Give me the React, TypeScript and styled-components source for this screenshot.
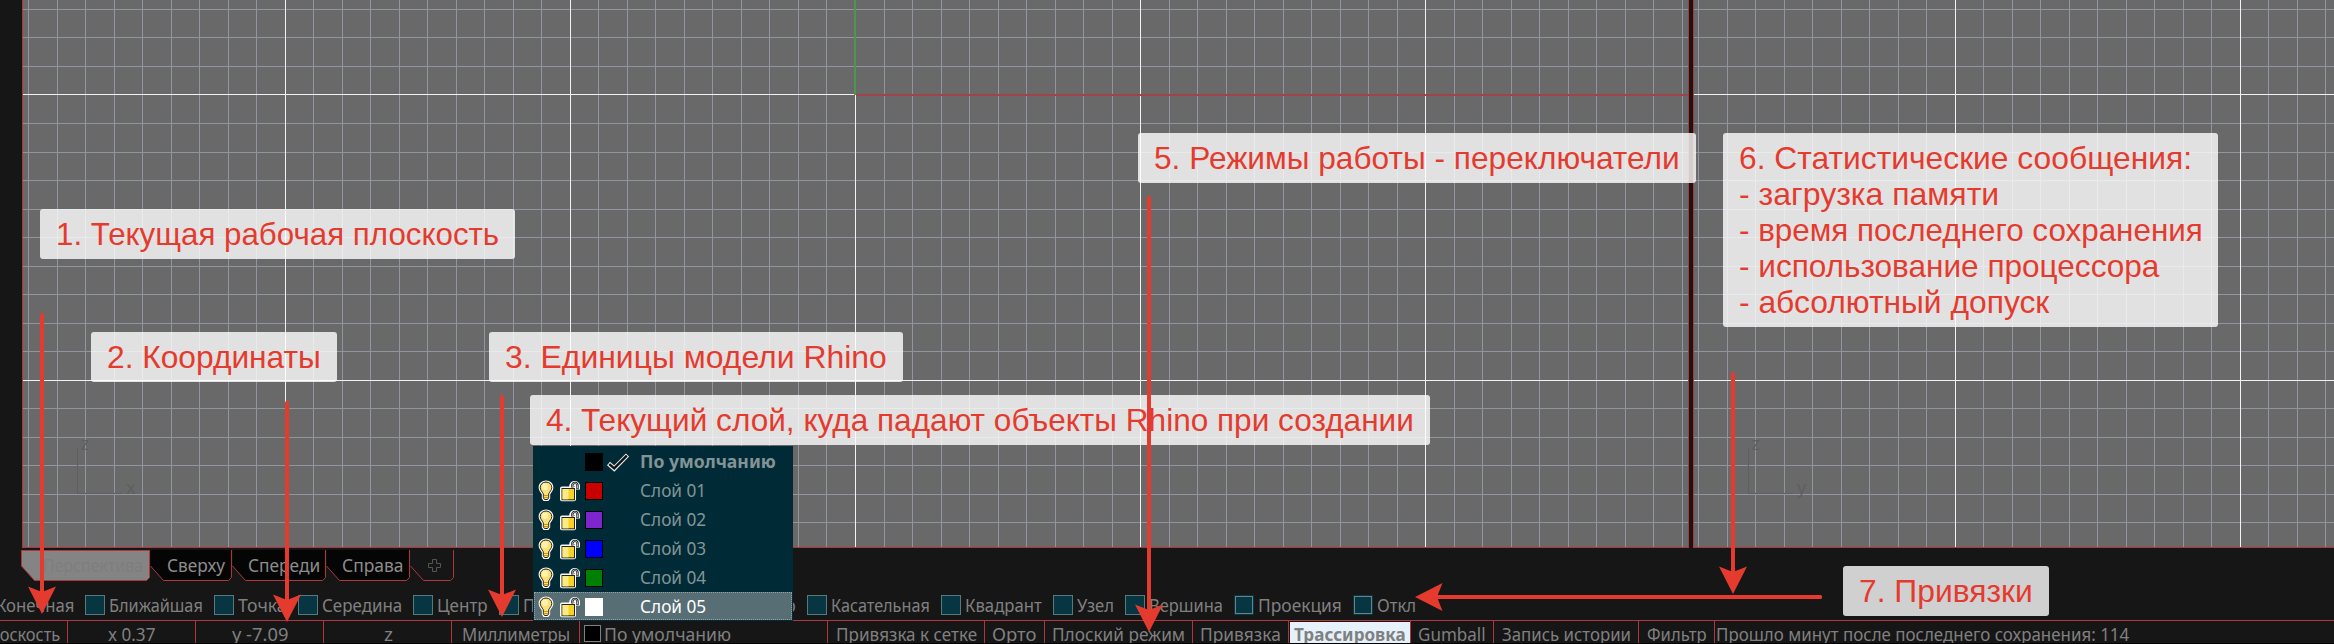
import React, { useLayoutEffect, useRef } from 'react';
import styled, { createGlobalStyle, css } from 'styled-components';

const RED = '#b0363b';
const ACCENT = '#e53b2e';
const DARK = '#161616';

const GlobalStyle = createGlobalStyle`
  *, *::before, *::after { box-sizing: border-box; }
  body { margin: 0; background: ${DARK}; overflow: hidden; }
`;

const Screen = styled.main`
  position: relative;
  display: flex;
  flex-direction: column;
  width: 2334px;
  height: 644px;
  overflow: hidden;
  background: ${DARK};
  color: #808080;
  font: 18px 'Noto Sans', 'Open Sans', sans-serif;
`;

/* ---------- text condensed or widened to a known width ---------- */

const FitBox = styled.span<{ $width: number }>`
  display: block;
  flex: none;
  width: ${(p) => p.$width}px;
  white-space: pre;
`;

const FitInner = styled.span`
  display: inline-block;
  transform-origin: 0 50%;
`;

function Fit({ width, children }: { width: number; children: string }) {
  const ref = useRef<HTMLSpanElement>(null);
  useLayoutEffect(() => {
    const el = ref.current;
    if (el) el.style.transform = `scaleX(${width / el.offsetWidth})`;
  }, [width, children]);
  return (
    <FitBox $width={width}>
      <FitInner ref={ref}>{children}</FitInner>
    </FitBox>
  );
}

/* ---------- viewports ---------- */

const Viewports = styled.section`
  display: flex;
  flex: none;
  gap: 4px;
  height: 548px;
  padding-left: 22px;
`;

const Viewport = styled.div<{ $width?: number }>`
  ${(p) => (p.$width ? css`flex: none; width: ${p.$width}px; border-right: 1px solid ${RED};` : css`flex: 1;`)}
  border-left: 1px solid ${RED};
  border-bottom: 1px solid ${RED};
  background: #696969;
  overflow: hidden;
`;

const Canvas = styled.svg`
  display: block;
  font: 18px 'Noto Sans', sans-serif;
`;

const STEP = 28.505;

function lines(origin: number, from: number, to: number, snap: (v: number) => number) {
  const out: { pos: number; major: boolean }[] = [];
  for (let n = -40; n <= 60; n++) {
    const pos = snap(origin + n * STEP);
    if (pos >= from && pos < to) out.push({ pos, major: n % 10 === 0 });
  }
  return out;
}

interface GridProps {
  left: number;
  right: number;
  origin: number;
  snap: (v: number) => number;
  children?: React.ReactNode;
}

function Grid({ left, right, origin, snap, children }: GridProps) {
  const w = right - left;
  const cols = lines(origin, left, right, snap);
  const rows = lines(94.49, 0, 547, Math.round);
  const order = [false, true];
  return (
    <Canvas width={w} height={547} viewBox={`${left} 0 ${w} 547`}>
      {order.map((major) => (
        <g key={String(major)} fill={major ? '#f2f2f2' : '#8f969f'} shapeRendering="crispEdges">
          {cols.filter((l) => l.major === major).map((l) => (
            <rect key={`c${l.pos}`} x={l.pos} y={0} width={1} height={547} />
          ))}
          {rows.filter((l) => l.major === major).map((l) => (
            <rect key={`r${l.pos}`} x={left} y={l.pos} width={w} height={1} />
          ))}
        </g>
      ))}
      {children}
    </Canvas>
  );
}

function AxisMark({ x, up, side }: { x: number; up: string; side: string }) {
  return (
    <g fill="#5f5f5f">
      <rect x={x} y={448} width={1} height={46} />
      <rect x={x} y={493} width={45} height={1} />
      <text x={x + 3.5} y={449.5}>{up}</text>
      <text x={x + 49} y={494}>{side}</text>
    </g>
  );
}

/* ---------- viewport tabs ---------- */

const Tabs = styled.nav`
  display: flex;
  flex: none;
  height: 42px;
  padding: 2px 0 0 21px;
`;

const Tab = styled.div<{ $width: number; $pad: number; $faint?: boolean }>`
  position: relative;
  flex: none;
  width: ${(p) => p.$width}px;
  height: 31px;
  padding-left: ${(p) => p.$pad}px;
  line-height: 30px;
  color: ${(p) => (p.$faint ? '#7e7e7e' : '#8c8c8c')};
`;

const TabShape = styled.svg`
  position: absolute;
  left: 0;
  top: 0;
  overflow: visible;
`;

const TabLabel = styled.div`
  position: relative;
`;

const PlusIcon = styled.svg`
  position: relative;
  display: block;
  margin-top: 9px;
`;

function ViewTab({ width, fill, pad, fit, label, faint }: {
  width: number; fill: string; pad: number; fit?: number; label?: string; faint?: boolean;
}) {
  return (
    <Tab $width={width} $pad={pad} $faint={faint}>
      <TabShape width={width} height={31}>
        <path d={`M0 0H${width - 0.5}V27.5L${width - 3.5} 30.5H13.5L0.5 16V0Z`} fill={fill} />
        <path
          d={`M${width - 0.5} 0V27.5L${width - 3.5} 30.5H13.5L0.5 16${faint ? 'V0.5H' + (width - 1) : ''}`}
          fill="none"
          stroke={RED}
        />
      </TabShape>
      {label ? (
        <TabLabel><Fit width={fit ?? 0}>{label}</Fit></TabLabel>
      ) : (
        <PlusIcon width="14" height="14" viewBox="0 0 14 14">
          <path d="M4.5 .5h4v4h4v4h-4v4h-4v-4h-4v-4h4z" fill="none" stroke="#555" />
        </PlusIcon>
      )}
    </Tab>
  );
}

/* ---------- object snaps ---------- */

const SnapBar = styled.div`
  display: flex;
  flex: none;
  align-items: center;
  height: 30px;
  margin-left: -28px;
`;

const Snap = styled.label<{ $width: number }>`
  display: flex;
  align-items: center;
  gap: 4px;
  flex: none;
  width: ${(p) => p.$width}px;
  line-height: 30px;
`;

const Check = styled.i<{ $inner?: boolean }>`
  flex: none;
  width: 20px;
  height: 20px;
  border: 1px solid ${(p) => (p.$inner ? '#073642' : '#58797c')};
  background: #073642;
  ${(p) => p.$inner && css`box-shadow: inset 0 0 0 1px #66838a;`}
`;

const SNAPS: [string, number][] = [
  ['Конечная', 113], ['Ближайшая', 129], ['Точка', 84], ['Середина', 115], ['Центр', 86],
  ['Пересечение', 141], ['Перпендикуляр', 167], ['Касательная', 134], ['Квадрант', 112],
  ['Узел', 72], ['Вершина', 109], ['Проекция', 119], ['Откл', 76],
];

/* ---------- status bar ---------- */

const StatusBar = styled.footer`
  display: flex;
  flex: none;
  height: 24px;
  border-top: 1px solid ${RED};
  border-bottom: 1px solid #000;
  overflow: hidden;
`;

const Cell = styled.div<{ $width: number; $pad: number; $first?: boolean; $active?: boolean }>`
  display: flex;
  flex: none;
  width: ${(p) => p.$width}px;
  height: 23px;
  padding-left: ${(p) => p.$pad}px;
  border-left: ${(p) => (p.$first ? 0 : 1)}px solid ${RED};
  line-height: 26px;
  ${(p) => p.$active && css`
    font-weight: 700;
    color: #808080;
    background: #e5f2fc;
    background-clip: padding-box;
    box-shadow: inset 0 1px 0 ${DARK}, inset 1px 0 0 ${DARK};
  `}
`;

const CellLabel = styled.div<{ $shift: number }>`
  flex: none;
  margin-left: ${(p) => p.$shift}px;
`;

const LayerSwatch = styled.i`
  flex: none;
  width: 17px;
  height: 17px;
  margin: 4px 3px 0 0;
  border: 1px solid #808080;
  background: #000;
`;

interface CellData { label: string; width: number; pad: number; fit: number; active?: boolean; swatch?: boolean }

const CELLS: CellData[] = [
  { label: 'Плоскость', width: 67, pad: 0, fit: 82 },
  { label: 'x 0.37', width: 128, pad: 40, fit: 47.5 },
  { label: 'y -7.09', width: 128, pad: 36, fit: 56 },
  { label: 'z', width: 128, pad: 60, fit: 8.5 },
  { label: 'Миллиметры', width: 128, pad: 10, fit: 108 },
  { label: 'По умолчанию', width: 248, pad: 4, fit: 127, swatch: true },
  { label: 'Привязка к сетке', width: 157, pad: 7.5, fit: 141.5 },
  { label: 'Орто', width: 60, pad: 7, fit: 44 },
  { label: 'Плоский режим', width: 148, pad: 7, fit: 133 },
  { label: 'Привязка', width: 96, pad: 7, fit: 81 },
  { label: 'Трассировка', width: 122, pad: 5, fit: 112, active: true },
  { label: 'Gumball', width: 83, pad: 7, fit: 68 },
  { label: 'Запись истории', width: 145, pad: 8, fit: 129 },
  { label: 'Фильтр', width: 76, pad: 8, fit: 60 },
  { label: 'Прошло минут после последнего сохранения: 114', width: 620, pad: 0.5, fit: 413.5 },
];

/* ---------- layer menu ---------- */

const LayerMenu = styled.div`
  position: absolute;
  left: 533px;
  top: 446px;
  width: 260px;
  height: 175px;
  padding: 1px 1px 0;
  background: #002b36;
`;

const LayerRow = styled.div<{ $selected?: boolean; $current?: boolean }>`
  display: grid;
  grid-template-columns: 22px 25px 21px 34px auto;
  align-items: center;
  height: 29px;
  padding-left: 4px;
  line-height: 29px;
  color: ${(p) => (p.$selected ? '#fff' : '#839496')};
  font-weight: ${(p) => (p.$current ? 700 : 400)};
  ${(p) => p.$selected && css`
    background: #586e75;
    outline: 1px dotted #93a1a1;
    outline-offset: -1px;
    height: 28px;
  `}
`;

const LayerColor = styled.i<{ $color: string; $white?: boolean }>`
  width: 18px;
  height: 18px;
  border: 1px solid ${(p) => (p.$white ? '#fff' : '#000')};
  background: ${(p) => p.$color};
`;

const RowIcon = styled.svg`
  display: block;
`;

const Bulb = () => (
  <RowIcon width="16" height="22" viewBox="0 0 16 22">
    <path d="M8 .5C3.8.5.6 3.6.6 7.5c0 3 2 4.6 3.2 6.7v4.3L5.6 21h4.8l1.8-2.5v-4.3c1.2-2.1 3.2-3.7 3.2-6.7C15.4 3.6 12.2.5 8 .5Z" fill="#fff" />
    <path d="M8 2C4.6 2 2.2 4.4 2.2 7.5c0 2.6 2 4 3.1 6.300v4L6.500 19.500h3l1.200-1.700v-4c1.100-2.300 3.100-3.700 3.100-6.300C13.800 4.400 11.400 2 8 2Z" fill="#fbe07a" stroke="#2c2410" />
    <path d="M6 15.500h4M6 17.500h4" stroke="#c9960f" strokeWidth="1.200" />
    <ellipse cx="7" cy="6.800" rx="3" ry="3.300" fill="#fff3ae" />
  </RowIcon>
);

const Lock = () => (
  <RowIcon width="21" height="22" viewBox="0 0 21 22">
    <path d="M11.8 9V5.500a3 3 0 0 1 5.700 0V9.500" fill="none" stroke="#fff" strokeWidth="5" strokeLinejoin="round" />
    <rect x="0" y="6.500" width="16" height="14.800" rx="2" fill="#fff" />
    <path d="M12.300 7.500V5.500a2.600 2.600 0 0 1 5.200 0V9" fill="none" stroke="#111" strokeWidth="2.300" />
    <path d="M12.300 7V5.500a2.600 2.600 0 0 1 5.200 0V8.500" fill="none" stroke="#d6dde2" strokeWidth=".8" />
    <rect x="2" y="8.500" width="12.500" height="11.300" fill="#f6d320" stroke="#2a2408" />
    <rect x="2.500" y="9" width="6" height="10.300" fill="#faea8c" />
  </RowIcon>
);

const CurrentMark = () => (
  <RowIcon width="24" height="20" viewBox="0 0 24 20">
    <path d="M2.500 11.500 8.200 16.500 21.500 3" fill="none" stroke="#e8eced" strokeWidth="4.600" />
    <path d="M3.300 12.200 8.200 16.300 20.800 3.600" fill="none" stroke="#111" strokeWidth="2.400" />
  </RowIcon>
);

const LAYERS = [
  { name: 'По умолчанию', color: '#000', fit: 136, current: true },
  { name: 'Слой 01', color: '#c80000', fit: 66 },
  { name: 'Слой 02', color: '#7d26cd', fit: 66 },
  { name: 'Слой 03', color: '#0000ff', fit: 66 },
  { name: 'Слой 04', color: '#008000', fit: 66 },
  { name: 'Слой 05', color: '#fff', fit: 66, selected: true },
];

/* ---------- annotations ---------- */

const Callout = styled.div<{ $x: number; $y: number; $width: number }>`
  position: absolute;
  left: ${(p) => p.$x}px;
  top: ${(p) => p.$y}px;
  width: ${(p) => p.$width}px;
  padding: 7px 16px;
  border-radius: 3px;
  background: rgba(255, 255, 255, 0.8);
  color: ${ACCENT};
  font: 32px/36px 'Liberation Sans', Arial, sans-serif;
`;

const ArrowLayer = styled.svg`
  position: absolute;
  left: 0;
  top: 0;
  pointer-events: none;
`;

interface CalloutData { x: number; y: number; width: number; text: [string, number][] }

const CALLOUTS: CalloutData[] = [
  { x: 40, y: 209, width: 475, text: [['1. Текущая рабочая плоскость', 443]] },
  { x: 91, y: 332, width: 246, text: [['2. Координаты', 214]] },
  { x: 489, y: 332, width: 414, text: [['3. Единицы модели Rhino', 382]] },
  { x: 530, y: 395, width: 900, text: [['4. Текущий слой, куда падают объекты Rhino при создании', 868]] },
  { x: 1138, y: 133, width: 558, text: [['5. Режимы работы - переключатели', 526]] },
  {
    x: 1723, y: 133, width: 495,
    text: [
      ['6. Статистические сообщения:', 453],
      ['- загрузка памяти', 260],
      ['- время последнего сохранения', 464],
      ['- использование процессора', 420],
      ['- абсолютный допуск', 310],
    ],
  },
  { x: 1843, y: 566, width: 206, text: [['7. Привязки', 174]] },
];

/* tip position, shaft length and rotation of each arrow */
const ARROWS: [number, number, number, number][] = [
  [42, 614, 301, 0],
  [287, 622, 221, 0],
  [502, 617, 222, 0],
  [1149, 632, 436, 0],
  [1733, 594, 222, 0],
  [1415, 597, 407, 90],
];

export default function App() {
  return (
    <Screen>
      <GlobalStyle />
      <Viewports>
        <Viewport $width={1667}>
          <Grid left={23} right={1688} origin={855} snap={Math.round}>
            <rect x={854} y={0} width={2} height={95} fill="#4a9848" />
            <rect x={856} y={94} width={832} height={2} fill="#a04547" />
            <AxisMark x={77} up="z" side="x" />
          </Grid>
        </Viewport>
        <Viewport>
          <Grid left={1694} right={2334} origin={1955} snap={(v) => Math.floor(v + 0.15)}>
            <AxisMark x={1748} up="z" side="y" />
          </Grid>
        </Viewport>
      </Viewports>

      <Tabs>
        <ViewTab width={129} fill="#848484" pad={22} fit={100} label="Перспектива" faint />
        <ViewTab width={82} fill="#050505" pad={16.5} fit={58.5} label="Сверху" />
        <ViewTab width={94} fill="#050505" pad={16} fit={72} label="Спереди" />
        <ViewTab width={84} fill="#050505" pad={16} fit={62} label="Справа" />
        <ViewTab width={44} fill={DARK} pad={18} />
      </Tabs>

      <SnapBar>
        {SNAPS.map(([name, width], i) => (
          <Snap key={name} $width={width}>
            <Check $inner={i > 10} />
            <Fit width={width - 24 - 11 - (name === 'Откл' ? 2 : 0)}>{name}</Fit>
          </Snap>
        ))}
      </SnapBar>

      <StatusBar>
        {CELLS.map((c, i) => (
          <Cell key={c.label} $width={c.width} $pad={c.pad} $first={i === 0} $active={c.active}>
            {c.swatch && <LayerSwatch />}
            <CellLabel $shift={i === 0 ? -22 : 0}><Fit width={c.fit}>{c.label}</Fit></CellLabel>
          </Cell>
        ))}
      </StatusBar>

      <LayerMenu>
        {LAYERS.map((l) => (
          <LayerRow key={l.name} $selected={l.selected} $current={l.current}>
            {l.current ? <span /> : <Bulb />}
            {l.current ? <span /> : <Lock />}
            <LayerColor $color={l.color} $white={l.selected} />
            {l.current ? <CurrentMark /> : <span />}
            <Fit width={l.fit}>{l.name}</Fit>
          </LayerRow>
        ))}
      </LayerMenu>

      {CALLOUTS.map((c) => (
        <Callout key={c.x} $x={c.x} $y={c.y} $width={c.width}>
          {c.text.map(([line, width]) => <Fit key={line} width={width}>{line}</Fit>)}
        </Callout>
      ))}

      <ArrowLayer width={2334} height={644}>
        {ARROWS.map(([x, y, len, turn]) => (
          <g key={x} transform={`translate(${x} ${y}) rotate(${turn})`} fill={ACCENT}>
            <rect x={-2} y={-len} width={4} height={len - 15} rx={1.5} />
            <path d="M0 0 14-27.500 0-22-14-27.500Z" />
          </g>
        ))}
      </ArrowLayer>
    </Screen>
  );
}
